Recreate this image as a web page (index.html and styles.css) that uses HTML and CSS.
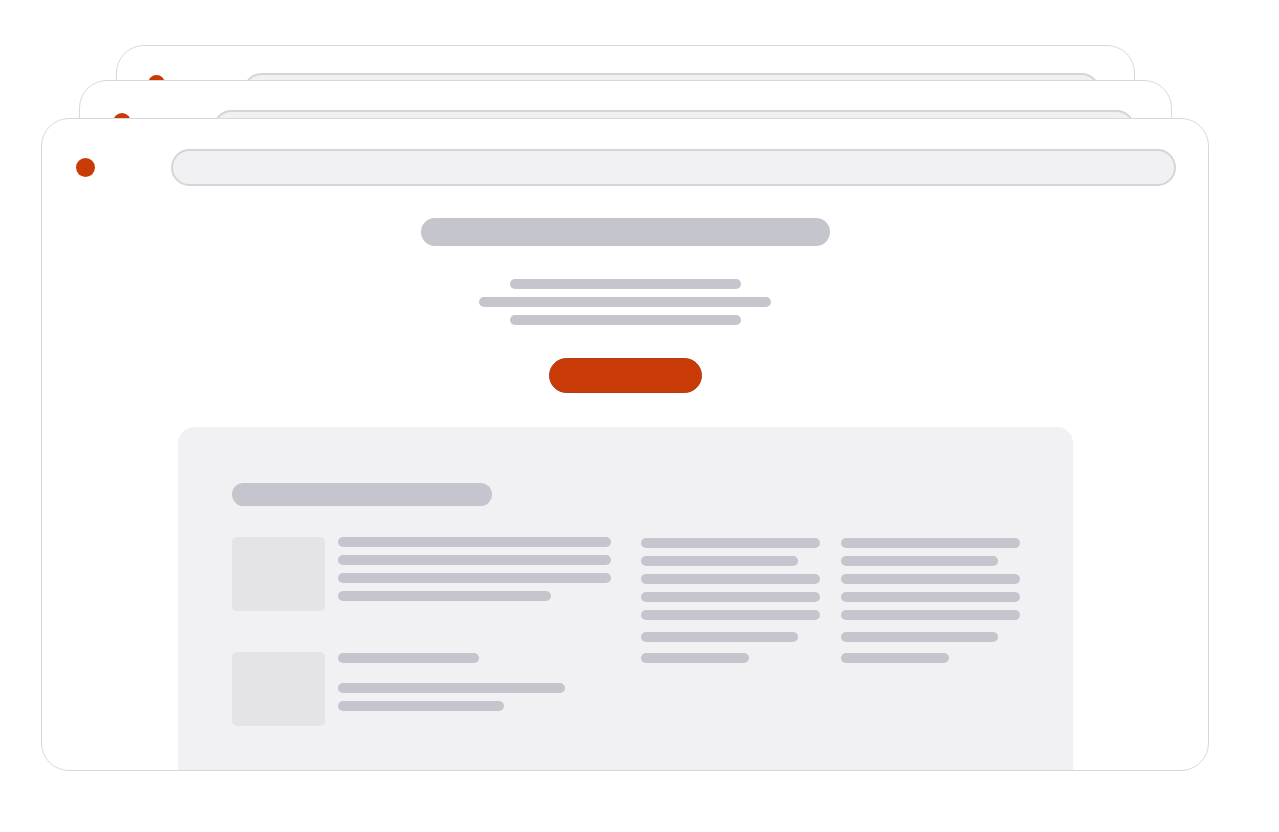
FILE: index.html
```html
<!DOCTYPE html>
<html lang="en">
<head>
<meta charset="utf-8">
<title>Browser windows</title>
<link rel="stylesheet" href="styles.css">
</head>
<body>
<div class="stack">
  <div class="window window--back">
    <div class="win-header">
      <span class="dot"></span>
      <span class="address"></span>
    </div>
  </div>
  <div class="window window--mid">
    <div class="win-header">
      <span class="dot"></span>
      <span class="address"></span>
    </div>
  </div>
  <div class="window window--front">
    <div class="win-header">
      <span class="dot"></span>
      <span class="address"></span>
    </div>
    <div class="hero">
      <div class="bar hero-title"></div>
      <div class="hero-lines">
        <div class="bar line w231"></div>
        <div class="bar line w292"></div>
        <div class="bar line w231"></div>
      </div>
      <div class="cta"></div>
    </div>
    <div class="card">
      <div class="bar card-title"></div>
      <div class="card-grid">
        <div class="items">
          <div class="item">
            <div class="thumb"></div>
            <div class="item-lines">
              <div class="bar line full"></div>
              <div class="bar line full"></div>
              <div class="bar line full"></div>
              <div class="bar line w213"></div>
            </div>
          </div>
          <div class="item">
            <div class="thumb"></div>
            <div class="item-lines">
              <div class="bar line w141"></div>
              <div class="bar line w227 spaced"></div>
              <div class="bar line w166"></div>
            </div>
          </div>
        </div>
        <div class="col">
          <div class="bar line full"></div>
          <div class="bar line w157"></div>
          <div class="bar line full"></div>
          <div class="bar line full"></div>
          <div class="bar line full"></div>
          <div class="bar line w157 gap12"></div>
          <div class="bar line w108 gap11"></div>
        </div>
        <div class="col">
          <div class="bar line full"></div>
          <div class="bar line w157"></div>
          <div class="bar line full"></div>
          <div class="bar line full"></div>
          <div class="bar line full"></div>
          <div class="bar line w157 gap12"></div>
          <div class="bar line w108 gap11"></div>
        </div>
      </div>
    </div>
  </div>
</div>
</body>
</html>
```

FILE: styles.css
```css
* { box-sizing: border-box; }

html, body {
  margin: 0;
  padding: 0;
  background: #ffffff;
  font-family: "Liberation Sans", Arial, sans-serif;
}

body {
  width: 1279px;
  height: 832px;
  overflow: hidden;
}

.stack {
  display: grid;
  width: 1279px;
  height: 832px;
}

.window {
  grid-area: 1 / 1;
  align-self: start;
  justify-self: start;
  background: #ffffff;
  border: 1px solid #d8d8dc;
  border-radius: 28px;
  overflow: hidden;
  display: flex;
  flex-direction: column;
}

.window--back {
  margin: 45px 0 0 116px;
  width: 1019px;
  height: 500px;
}

.window--mid {
  margin: 80px 0 0 79px;
  width: 1093px;
  height: 560px;
}

.window--front {
  margin: 118px 0 0 41px;
  width: 1168px;
  height: 653px;
}

.win-header {
  display: flex;
  align-items: flex-start;
}

.dot {
  flex: none;
  border-radius: 50%;
  background: #c83b07;
}

.address {
  flex: 1;
  height: 37px;
  border: 2px solid #d5d5d9;
  border-radius: 19px;
  background: #f1f1f3;
}

.window--front .win-header {
  padding: 30px 32px 0 34px;
}
.window--front .dot {
  width: 19px;
  height: 19px;
  margin-top: 9px;
  margin-right: 76px;
}

.window--mid .win-header {
  padding: 29px 36px 0 33px;
}
.window--mid .dot {
  width: 18px;
  height: 18px;
  margin-top: 3px;
  margin-right: 82px;
}

.window--back .win-header {
  padding: 27px 34px 0 31px;
}
.window--back .dot {
  width: 17px;
  height: 17px;
  margin-top: 2px;
  margin-right: 78px;
}

.bar {
  background: #c4c5cd;
  border-radius: 999px;
}

.line {
  height: 10px;
}

.hero {
  display: flex;
  flex-direction: column;
  align-items: center;
  padding-top: 32px;
}

.hero-title {
  width: 409px;
  height: 28px;
}

.hero-lines {
  display: flex;
  flex-direction: column;
  align-items: center;
  gap: 8px;
  margin-top: 33px;
}

.cta {
  width: 153px;
  height: 35px;
  margin-top: 33px;
  border-radius: 18px;
  background: #c83b06;
  border: 1px solid #b43c18;
}

.card {
  margin: 34px auto 0;
  width: 895px;
  flex: 1;
  background: #f1f1f3;
  border-radius: 16px 16px 0 0;
  padding: 56px 54px 0 54px;
}

.card-title {
  width: 260px;
  height: 23px;
}

.card-grid {
  display: grid;
  grid-template-columns: 409px 200px 179px;
  margin-top: 31px;
}

.items {
  width: 379px;
  display: flex;
  flex-direction: column;
  gap: 41px;
}

.item {
  display: flex;
  gap: 13px;
}

.thumb {
  flex: none;
  width: 93px;
  height: 74px;
  border-radius: 5px;
  background: #e4e4e8;
}

.item-lines {
  flex: 1;
  display: flex;
  flex-direction: column;
  gap: 8px;
}

.item:last-child .item-lines {
  padding-top: 1px;
}

.col {
  width: 179px;
  display: flex;
  flex-direction: column;
  gap: 8px;
  padding-top: 1px;
}

.full { width: 100%; }
.w231 { width: 231px; }
.w292 { width: 292px; }
.w213 { width: 213px; }
.w141 { width: 141px; }
.w227 { width: 227px; }
.w166 { width: 166px; }
.w157 { width: 157px; }
.w108 { width: 108px; }

.spaced { margin-top: 12px; }
.gap12 { margin-top: 4px; }
.gap11 { margin-top: 3px; }
```
